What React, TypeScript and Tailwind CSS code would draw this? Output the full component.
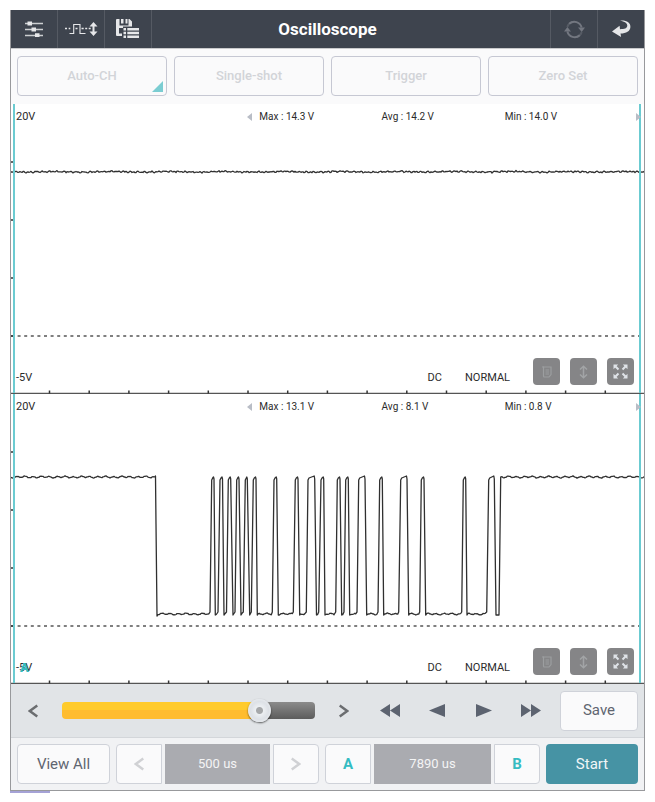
import { useState } from 'react'
import type { ReactNode } from 'react'

const CHART_W = 633
const CHART_H = 290

// small ripple so flat parts of a signal look sampled
function ripple(x: number, amp: number) {
  return amp * (Math.sin(x * 0.78) * 0.7 + Math.sin(x * 0.31 + 1) * 0.3 + Math.sin(x * 2.3) * 0.25)
}

// irregular noise for the supply line
function noise(x: number) {
  return Math.sin(x * 0.93) * 0.4 + Math.sin(x * 1.71 + 2) * 0.4 + Math.sin(x * 0.11) * 0.3 + Math.sin(x * x * 0.37) * 0.3
}

function flat(from: number, to: number, y: number, amp = 1) {
  let d = ''
  for (let x = from; x <= to; x += 1) {
    d += `L${x.toFixed(1)} ${(y + ripple(x, amp)).toFixed(1)}`
  }
  return d
}

// [rise start, top left, top right, fall end]
const PULSES = [
  [199, 200.7, 203, 204.3],
  [207, 209, 211.5, 213],
  [215.5, 217.3, 219.7, 222],
  [224, 225.7, 228, 230],
  [232.3, 234.3, 236.3, 238.7],
  [240.3, 242.3, 245, 246.3],
  [261.3, 263, 265.7, 267.3],
  [282.3, 284.3, 287, 288.7],
  [295.3, 297, 303.7, 305.5],
  [307.7, 310, 312.7, 314],
  [324.7, 326.3, 329, 330.7],
  [333, 334.7, 337.3, 338.7],
  [346, 347.7, 354, 355.7],
  [367, 368.7, 371.3, 372.7],
  [387.7, 389.7, 396, 397.7],
  [408.7, 410.3, 413, 414.7],
  [450.7, 452.3, 454.7, 456],
  [475.7, 477.7, 483.3, 485],
]

const HIGH = 83
const LOW = 220

function busTrace() {
  let d = `M0 ${HIGH}` + flat(0, 144, HIGH) + `L144.5 82L145 130L146 ${LOW + 2}`
  let x = 147
  for (const [rise, left, right, fall] of PULSES) {
    d += flat(x, rise - 1, LOW, 0.9)
    d += `L${rise} ${LOW - 2}L${left} ${HIGH + 3}L${left + 1} ${HIGH + 1}`
    d += `L${right - 0.5} ${right - left > 4 ? HIGH - 1 : HIGH}L${right} ${HIGH + 2}L${fall} ${LOW + 1}`
    x = fall + 1
  }
  d += `L488 ${LOW + 1}L489.7 ${HIGH}`
  return d + flat(490, CHART_W, HIGH)
}

function supplyTrace() {
  let d = 'M0 68'
  for (let x = 1; x <= CHART_W; x += 1) {
    d += `L${x} ${(67.8 + noise(x)).toFixed(1)}`
  }
  return d
}

const SUPPLY_TRACE = supplyTrace()
const BUS_TRACE = busTrace()

const X_TICKS = Array.from({ length: 15 }, (_, i) => 38.5 + i * 39.7)
const Y_TICKS = [58, 116, 174, 232]

function SlidersIcon() {
  return (
    <svg width="18" height="16" viewBox="0 0 18 16" fill="#e6e7e9" aria-hidden="true">
      <path d="M0 1.8h18v1.4H0zM0 7.8h18v1.4H0zM0 13.8h18v1.4H0z" opacity=".85" />
      <path d="M2.5.5h4.5v4H2.5zM6.5 6.5H11v4H6.5zM10 12.3h4.5v3.7H10z" />
    </svg>
  )
}

function WaveIcon() {
  return (
    <svg width="33" height="14" viewBox="0 0 33 14" fill="none" stroke="#e6e7e9" aria-hidden="true">
      <path d="M0 6.5h2M3.7 6.5h1.6M10.5 6.5h2M16.5 6.5h2.2M20.2 6.5h2M23.7 6.5h2" strokeWidth="1.6" />
      <path d="M4.5 11.5h4.2v-9h6.3v9h5.5" strokeWidth="1.1" />
      <path d="M28.5 3v8" strokeWidth="2" />
      <path d="M28.5 0l4 4.4h-8zM28.5 14l4-4.4h-8z" fill="#e6e7e9" stroke="none" />
    </svg>
  )
}

function SaveListIcon() {
  return (
    <svg width="24" height="20" viewBox="0 0 24 20" fill="#e6e7e9" aria-hidden="true">
      <path d="M1 0h2.5v6.5h9V0h1L16 2.6V7.5H7V9H3v5.5h3V17H1a1 1 0 0 1-1-1V1a1 1 0 0 1 1-1z" />
      <path d="M5 0h2.500v4.500H5zM9.500 0h2v4.500h-2z" />
      <path d="M7.500 9h2.500v2.500H7.500zM11.300 9H23v2.500H11.300zM7.500 12.800h2.500v2.500H7.500zM11.300 12.800H23v2.500H11.300zM7.500 16.500h2.500V19H7.500zM11.300 16.500H23V19H11.300z" />
    </svg>
  )
}

function RefreshIcon() {
  return (
    <svg width="21" height="19" viewBox="0 0 21 19" fill="none" stroke="#737780" strokeWidth="2" aria-hidden="true">
      <path d="M5.3 3.7A7.5 7.5 0 0 1 17.6 7.5M15.7 15.3A7.5 7.5 0 0 1 3.4 11.5" />
      <path d="M8 1.9A7.8 7.8 0 0 0 3.3 7M13 17.1A7.8 7.8 0 0 0 17.7 12" opacity=".45" />
      <path d="M14 7.6h7l-3.3 4.4zM0 11.4h7L3.4 7z" fill="#737780" stroke="none" />
    </svg>
  )
}

function ReturnIcon() {
  return (
    <svg width="19" height="18" viewBox="0 0 19 18" fill="#e6e7e9" aria-hidden="true">
      <path d="M8 .6C14.5 0 18.6 2.6 18.4 7c-.2 4.3-4.2 6.4-9.900 6.600l.6 3.400L0 11.400l7.600-5.600.4 3.400c4.400 0 7.200-.9 7.300-3.400C15.400 3.300 12.800 1.700 8 .600z" />
    </svg>
  )
}

function ExpandIcon() {
  return (
    <svg width="15" height="15" viewBox="0 0 15 15" fill="#dfe3e8" stroke="#dfe3e8" aria-hidden="true">
      <path d="M2 2l3.500 3.500M13 2L9.500 5.500M2 13l3.500-3.500M13 13L9.500 9.500" strokeWidth="2" />
      <path d="M.5.5h4.700L.5 5.200zM14.500.5v4.700L9.800.5zM.5 14.500V9.800l4.700 4.700zM14.500 14.500H9.800l4.700-4.700z" stroke="none" />
    </svg>
  )
}

function VerticalIcon() {
  return (
    <svg width="9" height="14" viewBox="0 0 9 14" fill="none" stroke="#a2a4a6" strokeWidth="1.5" aria-hidden="true">
      <path d="M4.500 1.500v11M1 4.500l3.500-3.300L8 4.500M1 9.500l3.500 3.300L8 9.500" />
    </svg>
  )
}

function NoteIcon() {
  return (
    <svg width="10" height="12" viewBox="0 0 10 12" fill="none" stroke="#9c9ea0" strokeWidth="1.2" aria-hidden="true">
      <path d="M1.500 1h7.500v7.500L7 11H2.500a1 1 0 0 1-1-1z" />
      <path d="M0 1h2M3.500 4H7M3.500 6H7M3.500 8H7" />
    </svg>
  )
}

function Chevron({ dir, className }: { dir: 'left' | 'right'; className: string }) {
  return (
    <svg width="10" height="14" viewBox="0 0 10 14" fill="none" stroke="currentColor" strokeWidth="2.5" className={className} aria-hidden="true">
      <path d={dir === 'left' ? 'M9.300 1.500L1.800 7l7.500 5.500' : 'M.7 1.500L8.200 7 .7 12.500'} />
    </svg>
  )
}

function Arrowhead({ dir }: { dir: 'left' | 'right' }) {
  return (
    <svg width="5" height="8" viewBox="0 0 5 8" fill="#b9bdc6" aria-hidden="true">
      <path d={dir === 'left' ? 'M5 0v8L0 4z' : 'M0 0v8l5-4z'} />
    </svg>
  )
}

function HeaderButton({ label, side, children }: { label: string; side: 'left' | 'right'; children: ReactNode }) {
  return (
    <button
      type="button"
      aria-label={label}
      className={
        side === 'left'
          ? 'flex w-[47px] items-center justify-center border-r border-[#555a63]'
          : 'flex w-[47px] items-center justify-center border-l border-[#555a63]'
      }
    >
      {children}
    </button>
  )
}

function ToolButton({ label, corner }: { label: string; corner?: boolean }) {
  return (
    <button
      type="button"
      className="relative h-10 rounded border border-[#c6c8d3] bg-[#fafafb] text-[13px] font-medium text-[#d2d4d8]"
    >
      {label}
      {corner && (
        <svg width="11" height="11" viewBox="0 0 11 11" className="absolute right-[3px] bottom-[3px]" aria-hidden="true">
          <path d="M11 0v11H0z" fill="#7bcdd2" />
        </svg>
      )}
    </button>
  )
}

function ChartButton({ label, children }: { label: string; children: ReactNode }) {
  return (
    <button type="button" aria-label={label} className="flex size-[27px] items-center justify-center rounded bg-[#858587]">
      {children}
    </button>
  )
}

interface ChannelProps {
  name: string
  trace: string
  max: string
  avg: string
  min: string
  marker?: boolean
}

function Channel({ name, trace, max, avg, min, marker }: ChannelProps) {
  return (
    <section aria-label={name} className="relative flex h-[290px] flex-col justify-between bg-white text-[11px] leading-[14px] text-[#2b2b2b]">
      <svg
        viewBox={`0 0 ${CHART_W} ${CHART_H}`}
        preserveAspectRatio="none"
        className="absolute inset-0 size-full"
        fill="none"
        aria-hidden="true"
      >
        <path d="M0 232H633" stroke="#555" strokeWidth="1.3" strokeDasharray="3 3.6" />
        <path d="M0 289.500H633" stroke="#555" strokeWidth="1.3" />
        {X_TICKS.map((x) => (
          <path key={x} d={`M${x} 286.500v3`} stroke="#333" strokeWidth="1.500" />
        ))}
        {Y_TICKS.map((y) => (
          <path key={y} d={`M0 ${y}h3`} stroke="#333" strokeWidth="1.500" />
        ))}
        <path d={trace} stroke="#303030" strokeWidth="1.300" strokeLinejoin="round" />
        <path d="M3 0V289M629 0V289" stroke="#6bcbd1" strokeWidth="2" />
      </svg>

      {/* Readings */}
      <div className="relative grid h-[25px] grid-cols-[231fr_134fr_123fr_131fr_8fr] items-center pl-[5px]">
        <span>20V</span>
        <span className="flex items-center gap-[7px] text-[10px]">
          <Arrowhead dir="left" />
          Max : {max} V
        </span>
        <span className="text-[10px]">Avg : {avg} V</span>
        <span className="text-[10px]">Min : {min} V</span>
        <Arrowhead dir="right" />
      </div>

      {/* Coupling, mode and chart tools */}
      <div className="relative flex items-end justify-between pr-[10px] pb-[9px] pl-[5px]">
        <span>-5V</span>
        {marker && <span className="absolute bottom-[9px] left-[9px] text-[13px] font-black text-[#35bcc2]">A</span>}
        <div className="flex items-end gap-[23px]">
          <span>DC</span>
          <span>NORMAL</span>
          <div className="flex gap-[10px]">
            <ChartButton label="Note"><NoteIcon /></ChartButton>
            <ChartButton label="Vertical scale"><VerticalIcon /></ChartButton>
            <ChartButton label="Full screen"><ExpandIcon /></ChartButton>
          </div>
        </div>
      </div>
    </section>
  )
}

function PlayButton({ label, d, width }: { label: string; d: string; width: number }) {
  return (
    <button type="button" aria-label={label} className="flex h-8 w-6 items-center justify-center">
      <svg width={width} height="13" viewBox={`0 0 ${width} 13`} fill="#5c6370" aria-hidden="true">
        <path d={d} />
      </svg>
    </button>
  )
}

const outlineButton = 'flex h-10 items-center justify-center border border-[#cfd2d9] bg-[#fafafb] text-[15px] text-[#5f6570]'
const readout = 'flex h-10 items-center justify-center bg-[#aaabb0] text-[13px] text-[#f4f4f5]'

export default function App() {
  const [position, setPosition] = useState(81)

  return (
    <div className="bg-white p-[10px] font-[Roboto,sans-serif]">
      <main className="border-x border-b border-[#98999c] bg-[#fafafb]">
        {/* Title bar */}
        <header className="flex h-[38px] items-stretch justify-between bg-[#3e444e]">
          <div className="flex">
            <HeaderButton label="Settings" side="left"><SlidersIcon /></HeaderButton>
            <HeaderButton label="Signal range" side="left"><WaveIcon /></HeaderButton>
            <HeaderButton label="Saved data" side="left"><SaveListIcon /></HeaderButton>
          </div>
          <h1 className="self-center text-[17px] leading-6 font-bold text-white">Oscilloscope</h1>
          <div className="flex pl-[47px]">
            <HeaderButton label="Refresh" side="right"><RefreshIcon /></HeaderButton>
            <HeaderButton label="Back" side="right"><ReturnIcon /></HeaderButton>
          </div>
        </header>

        {/* Capture tools */}
        <div className="grid grid-cols-4 gap-[7px] border-t border-[#c9cacc] px-[6px] pt-[7px] pb-2">
          <ToolButton label="Auto-CH" corner />
          <ToolButton label="Single-shot" />
          <ToolButton label="Trigger" />
          <ToolButton label="Zero Set" />
        </div>

        <Channel name="Channel 1" trace={SUPPLY_TRACE} max="14.3" avg="14.2" min="14.0" />
        <Channel name="Channel 2" trace={BUS_TRACE} max="13.1" avg="8.1" min="0.8" marker />

        {/* Playback position */}
        <div className="flex h-[54px] items-center gap-[17px] border-b border-[#d3d6da] bg-[#e1e4e7] pr-[6px] pl-[17px]">
          <div className="flex flex-1 items-center gap-6">
            <button type="button" aria-label="Step back">
              <Chevron dir="left" className="text-[#6b6d70]" />
            </button>
            <input
              type="range"
              min={0}
              max={100}
              value={position}
              onChange={(e) => setPosition(Number(e.target.value))}
              aria-label="Playback position"
              className="h-[17px] min-w-0 flex-1 appearance-none rounded bg-[linear-gradient(#ffcb2b_50%,#ffbc30_50%),linear-gradient(#8b8b8b,#5c5c5c)] bg-no-repeat [&::-webkit-slider-thumb]:size-[23px] [&::-webkit-slider-thumb]:appearance-none [&::-webkit-slider-thumb]:rounded-full [&::-webkit-slider-thumb]:bg-[radial-gradient(circle,#a6a8aa_3px,#eceff2_4px,#dde1e6_9px,#f5f6f8)] [&::-webkit-slider-thumb]:shadow-[0_1px_2px_rgba(0,0,0,0.6)]"
              style={{ backgroundSize: `${position - 2}% 100%, 100% 100%` }}
            />
            <button type="button" aria-label="Step forward">
              <Chevron dir="right" className="text-[#6b6d70]" />
            </button>
          </div>
          <div className="flex items-center gap-[23px] pl-3">
            <PlayButton label="Rewind" width={20} d="M10 0v13L0 6.500zM20 0v13L10 6.500z" />
            <PlayButton label="Previous" width={16} d="M16 0v13L0 6.500z" />
            <PlayButton label="Next" width={16} d="M0 0v13l16-6.500z" />
            <PlayButton label="Fast forward" width={20} d="M0 0v13l10-6.500zM10 0v13l10-6.500z" />
          </div>
          <button type="button" className={`${outlineButton} w-[78px] rounded`}>Save</button>
        </div>

        {/* Time base and cursors */}
        <div className="grid grid-cols-[93fr_203fr_215fr_92fr] gap-[6px] bg-[#f1f2f4] p-[6px]">
          <button type="button" className={`${outlineButton} rounded`}>View All</button>
          <div className="grid grid-cols-[46fr_105fr_46fr] gap-[3px]">
            <button type="button" aria-label="Shorter time base" className={`${outlineButton} rounded-l`}>
              <Chevron dir="left" className="text-[#d0d1d4]" />
            </button>
            <output className={readout}>500 us</output>
            <button type="button" aria-label="Longer time base" className={`${outlineButton} rounded-r`}>
              <Chevron dir="right" className="text-[#d0d1d4]" />
            </button>
          </div>
          <div className="grid grid-cols-[46fr_117fr_46fr] gap-[3px]">
            <button type="button" className={`${outlineButton} rounded-l`}>
              <span className="font-bold text-[#35bcc2]">A</span>
            </button>
            <output className={readout}>7890 us</output>
            <button type="button" className={`${outlineButton} rounded-r`}>
              <span className="font-bold text-[#35bcc2]">B</span>
            </button>
          </div>
          <button type="button" className="h-10 rounded bg-[#4693a4] text-[15px] text-[#f1f6f7]">Start</button>
        </div>
      </main>
      <div className="h-[2px] w-10 bg-[#a5a2d6]" />
    </div>
  )
}
